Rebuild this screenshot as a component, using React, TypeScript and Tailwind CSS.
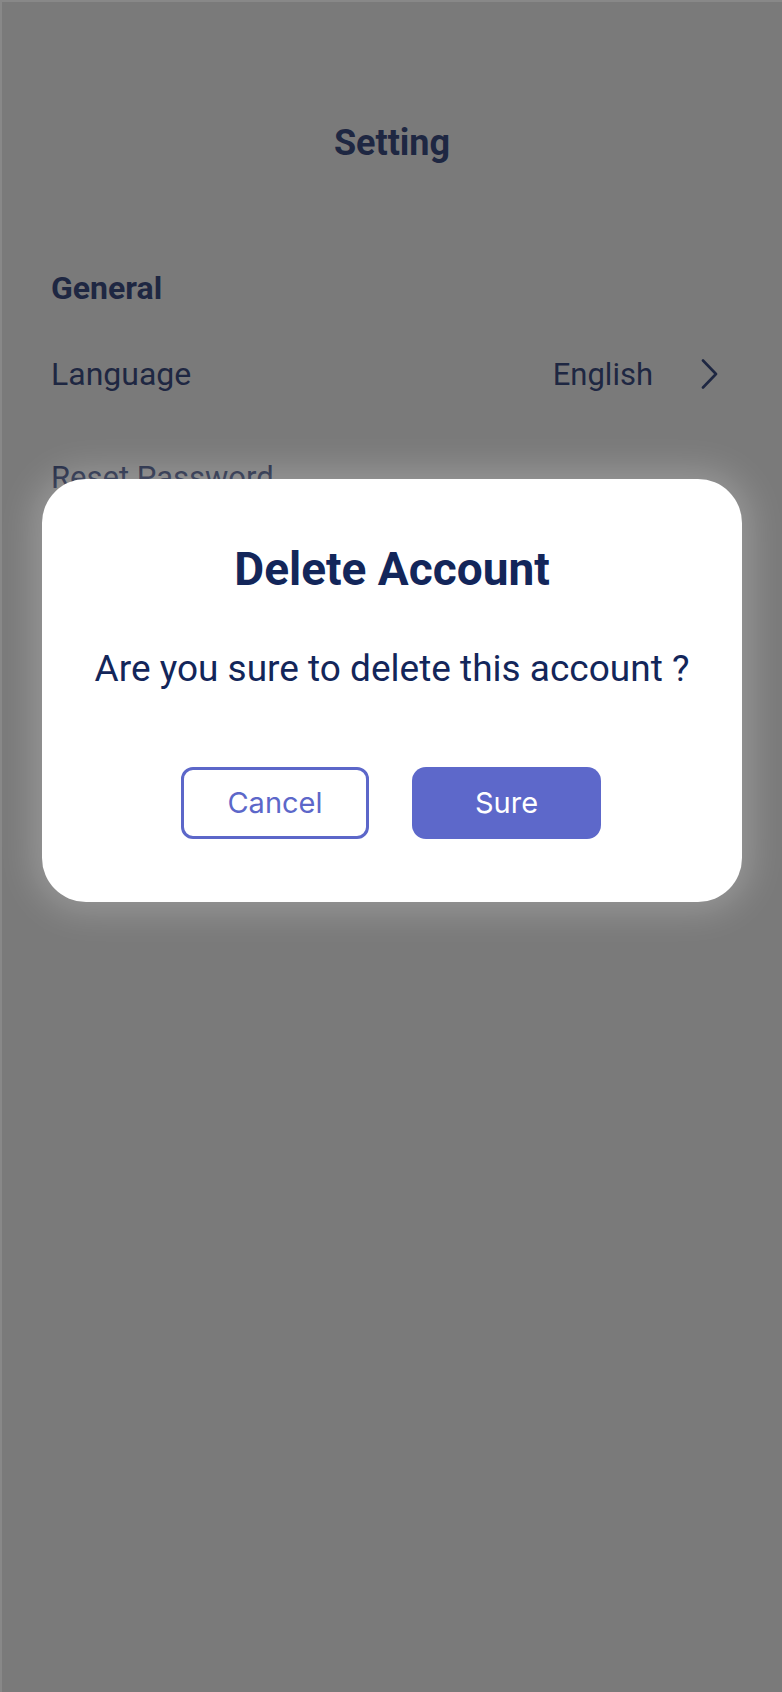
const navy = "text-[#1e2742]";

function Chevron() {
  return (
    <svg width="17" height="30" viewBox="0 0 17 30" fill="none" className={navy}>
      <polyline points="2,1.5 15,15 2,28.5" stroke="currentColor" strokeWidth="2.6" strokeLinecap="round" strokeLinejoin="round" />
    </svg>
  );
}

function Row({ label, value }: { label: string; value?: string }) {
  return (
    <div className="flex items-center justify-between">
      <span className={`text-[32px] leading-none ${navy}`}>{label}</span>
      {value ? (
        <div className="flex items-center gap-[48px]">
          <span className={`text-[31px] leading-none ${navy}`}>{value}</span>
          <Chevron />
        </div>
      ) : null}
    </div>
  );
}

function DeleteDialog() {
  return (
    <div className="absolute inset-0 flex justify-center pt-[477px]">
      <div className="flex h-[423px] w-[700px] flex-col items-center rounded-[44px] bg-white pt-[67px] shadow-[0_0_34px_10px_rgba(255,255,255,0.22)]">
        <h2 className="text-[46px] font-bold leading-none text-[#13265a]">Delete Account</h2>
        <p className="mt-[58px] text-[37px] leading-none text-[#13265a]">Are you sure to delete this account ?</p>
        <div className="mt-[80px] flex gap-[43px] pr-[2px] font-['Inter',sans-serif]">
          <button className="h-[72px] w-[188px] rounded-[12px] border-[3px] border-[#5c67c9] bg-white text-[29px] text-[#5c67c9]">
            Cancel
          </button>
          <button className="h-[72px] w-[189px] rounded-[14px] bg-[#5d68ca] text-[29px] text-white">Sure</button>
        </div>
      </div>
    </div>
  );
}

export default function App() {
  return (
    <div className="relative h-[1692px] w-[782px] overflow-hidden border-l-2 border-t-2 border-[#888888] bg-[#7a7a7a] font-['Roboto',sans-serif]">
      <div className="pt-[123px] text-center">
        <h1 className={`text-[36px] font-bold leading-none ${navy}`}>Setting</h1>
      </div>
      <div className="pl-[49px] pr-[64px]">
        <h3 className={`mt-[111px] text-[32px] font-bold leading-none ${navy}`}>General</h3>
        <div className="mt-[54px]">
          <Row label="Language" value="English" />
        </div>
        <div className="mt-[72px]">
          <span className={`text-[31px] leading-none ${navy}`}>Reset Password</span>
        </div>
      </div>
      <DeleteDialog />
    </div>
  );
}
